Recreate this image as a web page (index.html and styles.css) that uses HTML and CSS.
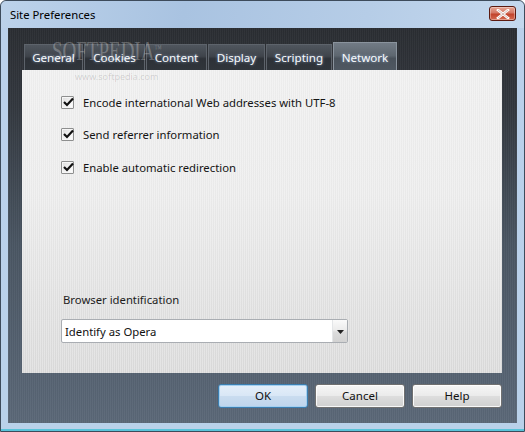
FILE: index.html
```html
<!DOCTYPE html>
<html>
<head>
<meta charset="utf-8">
<link rel="stylesheet" href="styles.css">
</head>
<body>
<div class="window">
  <div class="titlebar">
    <span class="title">Site Preferences</span>
    <button class="close" aria-label="Close">
      <svg width="14" height="10" viewBox="0 0 14 10"><path d="M2 1 L12 9 M12 1 L2 9" stroke="#fff" stroke-width="2.6" stroke-linecap="square" fill="none"/><path d="M2 1 L12 9 M12 1 L2 9" stroke="#6a1a12" stroke-width="0.6" fill="none" opacity="0.5"/></svg>
    </button>
  </div>
  <div class="client">
    <div class="watermark">SOFTPEDIA<sup>™</sup></div>
    <div class="watermark-url">www.softpedia.com</div>
    <div class="tabs">
      <div class="tab t1">General</div>
      <div class="tab t2">Cookies</div>
      <div class="tab t3">Content</div>
      <div class="tab t4">Display</div>
      <div class="tab t5">Scripting</div>
      <div class="tab t6 active">Network</div>
    </div>
    <div class="panel">
      <div class="options">
        <label class="check"><span class="box"><svg width="11" height="10" viewBox="0 0 11 10"><path d="M1 5 L4 8 L10 1.5" stroke="#111" stroke-width="2.2" fill="none"/></svg></span>Encode international Web addresses with UTF-8</label>
        <label class="check"><span class="box"><svg width="11" height="10" viewBox="0 0 11 10"><path d="M1 5 L4 8 L10 1.5" stroke="#111" stroke-width="2.2" fill="none"/></svg></span>Send referrer information</label>
        <label class="check"><span class="box"><svg width="11" height="10" viewBox="0 0 11 10"><path d="M1 5 L4 8 L10 1.5" stroke="#111" stroke-width="2.2" fill="none"/></svg></span>Enable automatic redirection</label>
      </div>
      <div class="ident">
        <div class="ident-label">Browser identification</div>
        <div class="select">
          <span class="select-text">Identify as Opera</span>
          <span class="select-btn"><svg width="7" height="4" viewBox="0 0 7 4"><path d="M0 0 L7 0 L3.5 4 Z" fill="#222"/></svg></span>
        </div>
      </div>
    </div>
    <div class="buttons">
      <button class="btn default">OK</button>
      <button class="btn">Cancel</button>
      <button class="btn">Help</button>
    </div>
  </div>
  <div class="bottom-frame"></div>
</div>
</body>
</html>
```

FILE: styles.css
```css
html, body {
  margin: 0;
  padding: 0;
}
body {
  width: 525px;
  height: 432px;
  overflow: hidden;
  font-family: "Noto Sans", "Open Sans", sans-serif;
  font-size: 11.3px;
  color: #1a1a1a;
  background: #ffffff;
}
.window {
  width: 525px;
  height: 432px;
  box-sizing: border-box;
  border: 1px solid #3d4b5b;
  border-radius: 6px 6px 0 0;
  background: linear-gradient(180deg, #b3cbe6 0px, #bad0ea 30px, #b9d1ea 100%);
  display: flex;
  flex-direction: column;
}
.titlebar {
  height: 27px;
  flex: none;
  display: flex;
  align-items: center;
  justify-content: space-between;
  padding: 0 9px 0 9px;
  background: linear-gradient(100deg, #bcd2ea 0%, #a9c3e1 35%, #b6cde7 70%, #c4d8ee 100%);
  border-radius: 6px 6px 0 0;
}
.title {
  color: #000;
  font-size: 11.3px;
}
.close {
  width: 27px;
  height: 15px;
  padding: 0;
  margin: 0 -1px 2px 0;
  border: 1px solid #5c1a10;
  border-radius: 3px;
  background: linear-gradient(180deg, #e8a593 0%, #d47866 45%, #c2432c 55%, #d46b52 100%);
  display: flex;
  align-items: center;
  justify-content: center;
  box-shadow: inset 0 0 0 1px rgba(255,255,255,0.35);
}
.client {
  position: relative;
  margin: 0 7px 0 7px;
  height: 395px;
  flex: none;
  background:
    repeating-linear-gradient(90deg, rgba(255,255,255,0.03) 0 1px, rgba(0,0,0,0.03) 1px 2px),
    linear-gradient(180deg, #2a2d32 0%, #33383f 20%, #4a5663 55%, #5b6878 100%);
  padding: 14px 0 0 14px;
  box-sizing: border-box;
}
.watermark {
  position: absolute;
  left: 44px;
  top: 9px;
  font-family: "Liberation Serif", serif;
  font-size: 19px;
  line-height: 19px;
  color: rgba(255,255,255,0.26);
  transform: scaleY(1.45);
  transform-origin: 0 0;
  pointer-events: none;
  z-index: 3;
}
.watermark sup {
  font-size: 7px;
  vertical-align: top;
  position: relative;
  top: -1px;
}
.watermark-url {
  position: absolute;
  left: 67px;
  top: 42px;
  font-size: 9px;
  color: rgba(0,0,0,0.14);
  pointer-events: none;
  z-index: 3;
}
.tabs {
  display: flex;
  align-items: flex-end;
  height: 28px;
  padding-left: 2px;
}
.tab {
  height: 26px;
  box-sizing: border-box;
  border: 1px solid #5d636b;
  border-bottom: none;
  margin-right: 1px;
  background: linear-gradient(180deg, #50565e 0%, #3f444b 45%, #2d3137 55%, #30353b 100%);
  color: #f8fafc;
  text-shadow: 0 0 3px rgba(170,200,240,0.8);
  display: flex;
  align-items: center;
  justify-content: center;
  font-size: 11.6px;
  padding-bottom: 1px;
}
.t1 { width: 59px; }
.t2 { width: 61px; }
.t3 { width: 61px; }
.t4 { width: 57px; }
.t5 { width: 66px; }
.t6 { width: 64px; }
.tab.active {
  height: 29px;
  margin-bottom: -1px;
  border-color: #8a939d;
  background: linear-gradient(180deg, #727b85 0%, #5e6770 45%, #4a525b 55%, #4f5862 100%);
  padding-top: 2px;
}
.panel {
  width: 480px;
  height: 303px;
  box-sizing: border-box;
  background:
    repeating-linear-gradient(90deg, rgba(255,255,255,0.25) 0 1px, rgba(0,0,0,0.012) 1px 2px),
    linear-gradient(180deg, #efefef 0%, #ececec 40%, #e0e0e0 80%, #dbdbdb 100%);
  padding: 22px 0 0 39px;
  display: flex;
  flex-direction: column;
  position: relative;
  z-index: 1;
}
.options {
  display: flex;
  flex-direction: column;
  gap: 12.5px;
}
.check {
  display: flex;
  align-items: center;
  height: 20px;
  color: #141414;
}
.box {
  width: 11px;
  height: 11px;
  border: 1px solid #8e8f8f;
  border-radius: 1px;
  background: linear-gradient(135deg, #dcdcdc 0%, #f4f4f4 60%, #ffffff 100%);
  box-shadow: inset 0 0 0 1px #f6f6f6;
  margin-right: 9px;
  position: relative;
  flex: none;
}
.box svg {
  position: absolute;
  left: 1px;
  top: 0px;
}
.ident {
  margin-top: 115px;
  margin-left: 2px;
}
.ident-label {
  color: #1c1c1c;
  height: 16px;
  line-height: 16px;
}
.select {
  margin-top: 11px;
  margin-left: -2px;
  width: 287px;
  height: 24px;
  box-sizing: border-box;
  border: 1px solid #a9adb2;
  border-radius: 2px;
  background: #ffffff;
  display: flex;
  align-items: center;
  justify-content: space-between;
}
.select-text {
  padding-left: 3px;
  color: #111;
}
.select-btn {
  width: 15px;
  height: 22px;
  box-sizing: border-box;
  border-left: 1px solid #e4e6e8;
  background: linear-gradient(180deg, #fafafa 0%, #ececec 45%, #dcdcdc 55%, #d2d2d2 100%);
  display: flex;
  align-items: center;
  justify-content: center;
  padding-top: 1px;
}
.buttons {
  display: flex;
  justify-content: flex-end;
  gap: 7px;
  margin-top: 11px;
  padding-right: 15px;
}
.btn {
  width: 90px;
  height: 24px;
  box-sizing: border-box;
  font-family: "Noto Sans", "Open Sans", sans-serif;
  font-size: 11.5px;
  color: #111;
  border: 1px solid #707070;
  border-radius: 3px;
  background: linear-gradient(180deg, #f6f6f6 0%, #ebebeb 48%, #dddddd 52%, #d0d0d0 100%);
  box-shadow: inset 0 0 0 1px rgba(255,255,255,0.85);
  padding: 0 0 1px 0;
}
.btn.default {
  border-color: #3c7fb1;
  background: linear-gradient(180deg, #e5eff9 0%, #d9e7f6 48%, #c9dcef 52%, #bfd5ec 100%);
  box-shadow: inset 0 0 0 1px #a5d0f0;
}
.bottom-frame {
  flex: 1;
  border-bottom: 2px solid #59c3d9;
}
```
